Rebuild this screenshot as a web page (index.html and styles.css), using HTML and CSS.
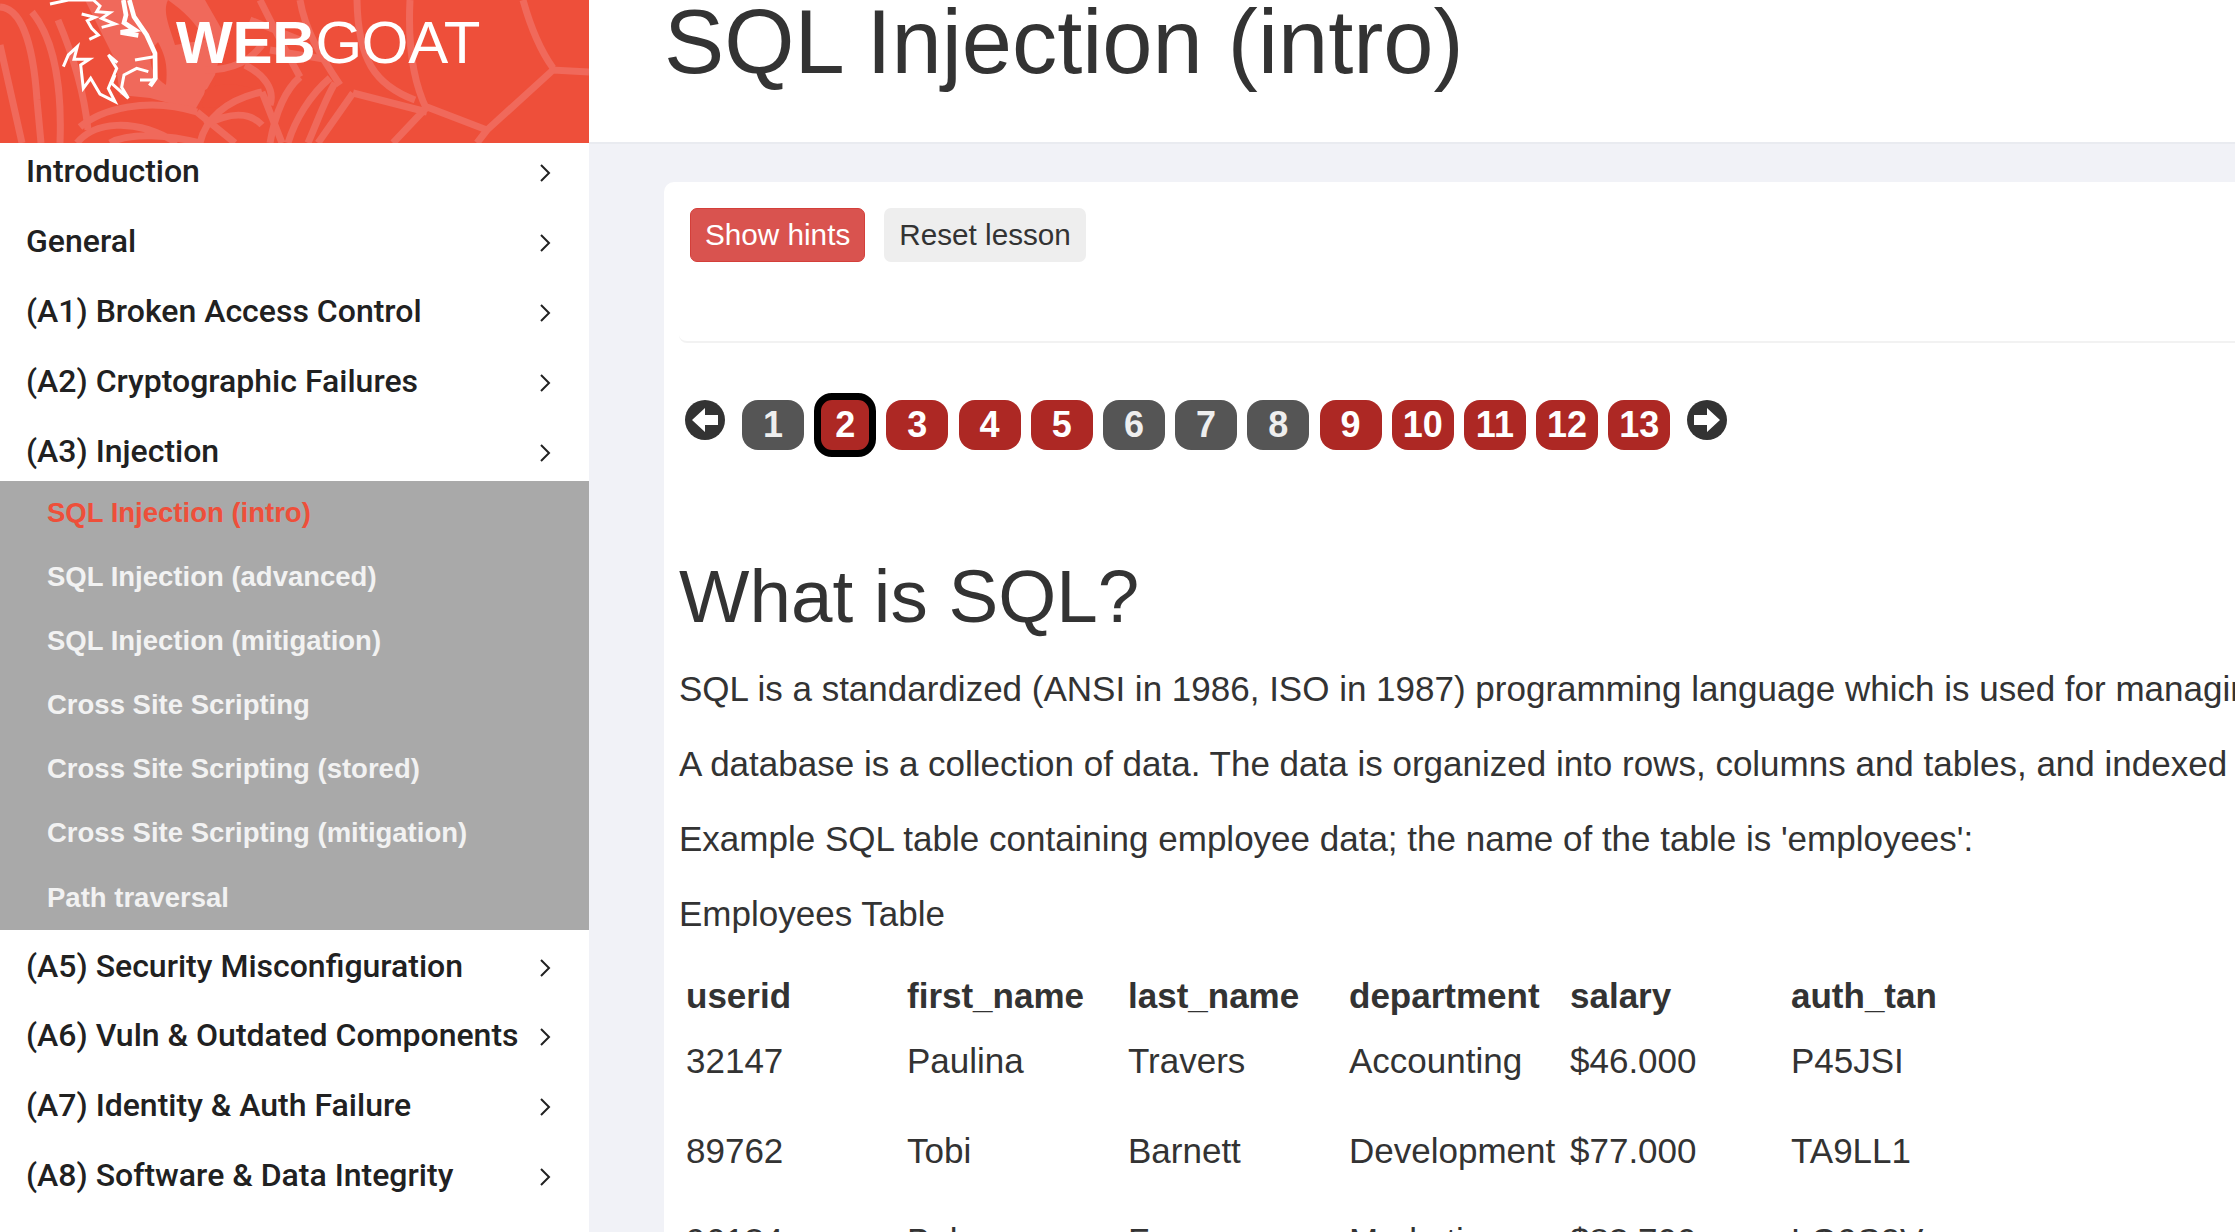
FILE: index.html
```html
<!DOCTYPE html>
<html lang="en">
<head>
	<meta charset="UTF-8">
	<title>WebGoat</title>
	<link rel="stylesheet" href="styles.css">
</head>
<body>

	<aside class="sidebar">
		<div class="brand">
			<svg class="brand-web" viewBox="0 0 589 143" fill="none" stroke="#f0695b" stroke-width="7">
				<path d="M0 7C20 8 33 40 37 100L41 143M0 45L22 143M32 12C55 40 62 90 60 143M58 20C75 60 85 100 88 130"/>
				<path fill="#f0695b" stroke="none" d="M85 0H205L225 35L215 75L195 110L150 98L120 95L115 60Z"/>
				<path fill="#ee4f3a" stroke="none" d="M168 0C185 12 195 22 205 40L175 45C170 28 162 12 168 0ZM205 90C225 80 245 85 262 92C240 105 220 108 202 108ZM158 42C165 55 168 65 166 85C150 75 145 55 158 42Z"/>
				<path d="M80 127C100 110 147 96 197 112M77 143C93 123 133 116 177 143M110 143C130 132 170 135 200 143M197 112L235 143"/>
				<path d="M200 143C205 120 225 100 262 92M205 125C230 112 250 112 262 125M262 92L282 143M205 70C235 70 250 60 262 45M245 65C265 75 275 90 270 105"/>
				<path d="M300 77C285 90 275 115 270 143M330 78C310 95 295 120 288 143M353 93L318 143M335 83C325 100 320 115 308 143"/>
				<path d="M353 93L427 112M427 107L393 143M427 107L487 130L477 143M487 130L553 70L589 72M523 0C530 25 540 50 553 68"/>
				<path d="M410 0C408 40 412 80 427 110M357 0C358 60 375 85 415 100M260 0C275 30 285 50 300 77M300 0C305 30 320 55 340 85"/>
				<path d="M250 20L300 40M270 50L330 60"/>
			</svg>
			<svg class="brand-goat" viewBox="0 0 600 429" fill="none" stroke="#fff" stroke-width="9" stroke-linejoin="miter">
				<path d="M150 12L205 0H280L300 18L290 35L330 38L305 55L345 72L305 82M245 42L285 52L262 62L275 85L295 105L268 118"/>
				<path stroke-width="14" d="M370 0L378 45L372 68L405 90L362 97L415 106M388 0L402 50L440 105L465 160L466 235L450 258"/>
				<path d="M405 180L462 170M420 240L462 240"/>
				<path d="M190 200L205 165L232 140L222 178L268 178L242 195L250 265L272 235L300 282L345 305L325 265L350 205L325 165L352 188"/>
				<path d="M345 225L335 250L385 295L365 262L372 225L410 205L445 215"/>
			</svg>
			<div class="brand-name"><b>WEB</b>GOAT</div>
		</div>
		<nav class="menu">
			<a class="menu-item" href="#">Introduction<svg class="chevron" viewBox="0 0 12 20"><path d="M2 2l8 8-8 8"/></svg></a>
			<a class="menu-item" href="#">General<svg class="chevron" viewBox="0 0 12 20"><path d="M2 2l8 8-8 8"/></svg></a>
			<a class="menu-item" href="#">(A1) Broken Access Control<svg class="chevron" viewBox="0 0 12 20"><path d="M2 2l8 8-8 8"/></svg></a>
			<a class="menu-item" href="#">(A2) Cryptographic Failures<svg class="chevron" viewBox="0 0 12 20"><path d="M2 2l8 8-8 8"/></svg></a>
			<a class="menu-item" href="#">(A3) Injection<svg class="chevron" viewBox="0 0 12 20"><path d="M2 2l8 8-8 8"/></svg></a>
			<div class="submenu">
				<a class="active" href="#">SQL Injection (intro)</a>
				<a href="#">SQL Injection (advanced)</a>
				<a href="#">SQL Injection (mitigation)</a>
				<a href="#">Cross Site Scripting</a>
				<a href="#">Cross Site Scripting (stored)</a>
				<a href="#">Cross Site Scripting (mitigation)</a>
				<a href="#">Path traversal</a>
			</div>
			<a class="menu-item" href="#">(A5) Security Misconfiguration<svg class="chevron" viewBox="0 0 12 20"><path d="M2 2l8 8-8 8"/></svg></a>
			<a class="menu-item" href="#">(A6) Vuln &amp; Outdated Components<svg class="chevron" viewBox="0 0 12 20"><path d="M2 2l8 8-8 8"/></svg></a>
			<a class="menu-item" href="#">(A7) Identity &amp; Auth Failure<svg class="chevron" viewBox="0 0 12 20"><path d="M2 2l8 8-8 8"/></svg></a>
			<a class="menu-item" href="#">(A8) Software &amp; Data Integrity<svg class="chevron" viewBox="0 0 12 20"><path d="M2 2l8 8-8 8"/></svg></a>
		</nav>
	</aside>

	<div class="main">
		<header class="topbar">
			<h1>SQL Injection (intro)</h1>
		</header>
		<div class="content">
			<section class="card">
				<div class="lesson-buttons">
					<button class="btn btn-hints">Show hints</button>
					<button class="btn btn-reset">Reset lesson</button>
				</div>
				<div class="hints-panel"></div>
				<div class="pager">
					<svg class="arrow" viewBox="0 0 40 40"><circle cx="20" cy="20" r="20"/><path d="M7 20L20 8v7h13v10H20v7z"/></svg>
					<div class="pages">
						<a class="page done">1</a>
						<a class="page current">2</a>
						<a class="page">3</a>
						<a class="page">4</a>
						<a class="page">5</a>
						<a class="page done">6</a>
						<a class="page done">7</a>
						<a class="page done">8</a>
						<a class="page">9</a>
						<a class="page">10</a>
						<a class="page">11</a>
						<a class="page">12</a>
						<a class="page">13</a>
					</div>
					<svg class="arrow" viewBox="0 0 40 40"><circle cx="20" cy="20" r="20"/><path d="M33 20L20 8v7H7v10h13v7z"/></svg>
				</div>
				<article class="lesson">
					<h2>What is SQL?</h2>
					<p>SQL is a standardized (ANSI in 1986, ISO in 1987) programming language which is used for managing relational databases and performing various operations on the data in them.</p>
					<p>A database is a collection of data. The data is organized into rows, columns and tables, and indexed to make finding relevant information more efficient.</p>
					<p>Example SQL table containing employee data; the name of the table is 'employees':</p>
					<p>Employees Table</p>
					<table>
						<tr><th>userid</th><th>first_name</th><th>last_name</th><th>department</th><th>salary</th><th>auth_tan</th></tr>
						<tr><td>32147</td><td>Paulina</td><td>Travers</td><td>Accounting</td><td>$46.000</td><td>P45JSI</td></tr>
						<tr><td>89762</td><td>Tobi</td><td>Barnett</td><td>Development</td><td>$77.000</td><td>TA9LL1</td></tr>
						<tr><td>96134</td><td>Bob</td><td>Franco</td><td>Marketing</td><td>$83.700</td><td>LO9S2V</td></tr>
					</table>
				</article>
			</section>
		</div>
	</div>

</body>
</html>
```

FILE: styles.css
```css
html, body {
	margin: 0;
	height: 100%;
	overflow: hidden;
}

body {
	display: flex;
	width: 2235px;
	height: 1232px;
	font-family: "Liberation Sans", Arial, sans-serif;
	color: #333;
	background: #f1f2f7;
}

.sidebar {
	flex: 0 0 589px;
	background: #fff;
	overflow: hidden;
}

.brand {
	position: relative;
	z-index: 1;
	height: 143px;
	background: #ee4f3a;
	overflow: hidden;
}

.brand-web {
	position: absolute;
	top: 0;
	left: 0;
	width: 589px;
	height: 143px;
}

.brand-goat {
	position: absolute;
	top: 0;
	left: 0;
	width: 200px;
	height: 143px;
}

.brand-name {
	position: absolute;
	top: 11px;
	left: 176px;
	font-size: 60px;
	line-height: 64px;
	letter-spacing: -0.2px;
	color: #fff;
}

.menu {
	margin-top: -7.5px;
}

.menu-item {
	display: flex;
	align-items: center;
	justify-content: space-between;
	box-sizing: border-box;
	height: 69.85px;
	padding: 2px 38px 0 26px;
	font-family: Roboto, sans-serif;
	font-size: 32px;
	font-weight: 500;
	color: #212121;
	text-decoration: none;
}

.chevron {
	flex: none;
	width: 12px;
	height: 20px;
	margin-top: 4px;
	fill: none;
	stroke: #212121;
	stroke-width: 2;
}

.submenu {
	position: relative;
	display: flex;
	flex-direction: column;
	background: #a9a9a9;
	margin-top: -4px;
}

.submenu a {
	height: 64.15px;
	line-height: 64px;
	padding-left: 47px;
	font-size: 27.5px;
	font-weight: 700;
	color: #f2f2f2;
	text-decoration: none;
}

.submenu a.active {
	color: #ee4f3a;
}

.main {
	flex: 1;
	min-width: 0;
}

.topbar {
	height: 142px;
	background: #fff;
	border-bottom: 2px solid #e9ebf0;
}

h1 {
	margin: 0;
	padding-left: 75px;
	font-size: 90.3px;
	font-weight: 400;
	line-height: 84px;
	white-space: nowrap;
}

.content {
	padding: 38px 0 0 75px;
}

.card {
	background: #fff;
	border-radius: 10px 0 0 0;
	padding: 26px 0 0 15px;
	height: 1100px;
	white-space: nowrap;
}

.lesson-buttons {
	display: flex;
	gap: 19px;
	padding-left: 11px;
}

.btn {
	height: 54px;
	padding: 0 14px;
	font-family: inherit;
	font-size: 29.7px;
	border: 1px solid transparent;
	border-radius: 7px;
}

.btn-hints {
	color: #fff;
	background: #d9534f;
	border-color: #d43f3a;
}

.btn-reset {
	color: #333;
	background: #eee;
}

.hints-panel {
	height: 79px;
	border-bottom: 2px solid #f2f2f2;
	border-radius: 0 0 0 8px;
}

.pager {
	display: flex;
	align-items: flex-start;
	margin: 51px 0 0 6px;
}

.arrow {
	flex: none;
	width: 40px;
	height: 40px;
	margin-top: 6px;
	fill: #333;
}

.arrow path {
	fill: #fff;
}

.pages {
	display: flex;
	align-items: center;
	gap: 10.2px;
	margin: 6px 17px 0 17px;
}

.page {
	display: flex;
	align-items: center;
	justify-content: center;
	box-sizing: border-box;
	width: 62px;
	height: 50px;
	font-size: 36px;
	font-weight: 700;
	color: #fff;
	background: #ad2824;
	border-radius: 16px;
}

.page.done {
	color: #eee;
	background: #555;
}

.page.current {
	height: 64px;
	margin: -7px 0;
	border: 7px solid #000;
	border-radius: 18px;
}

.lesson {
	padding-top: 106px;
}

h2 {
	margin: 0 0 32px;
	font-size: 74.6px;
	font-weight: 400;
	line-height: 80px;
}

.lesson p {
	margin: 0 0 34px;
	font-size: 35px;
	line-height: 41px;
}

table {
	border-collapse: collapse;
	font-size: 35px;
	margin-top: 42px;
}

th, td {
	width: 221px;
	min-width: 221px;
	padding: 0 7px;
	text-align: left;
	vertical-align: top;
	box-sizing: border-box;
}

th {
	height: 65px;
}

td {
	height: 90px;
}
```
